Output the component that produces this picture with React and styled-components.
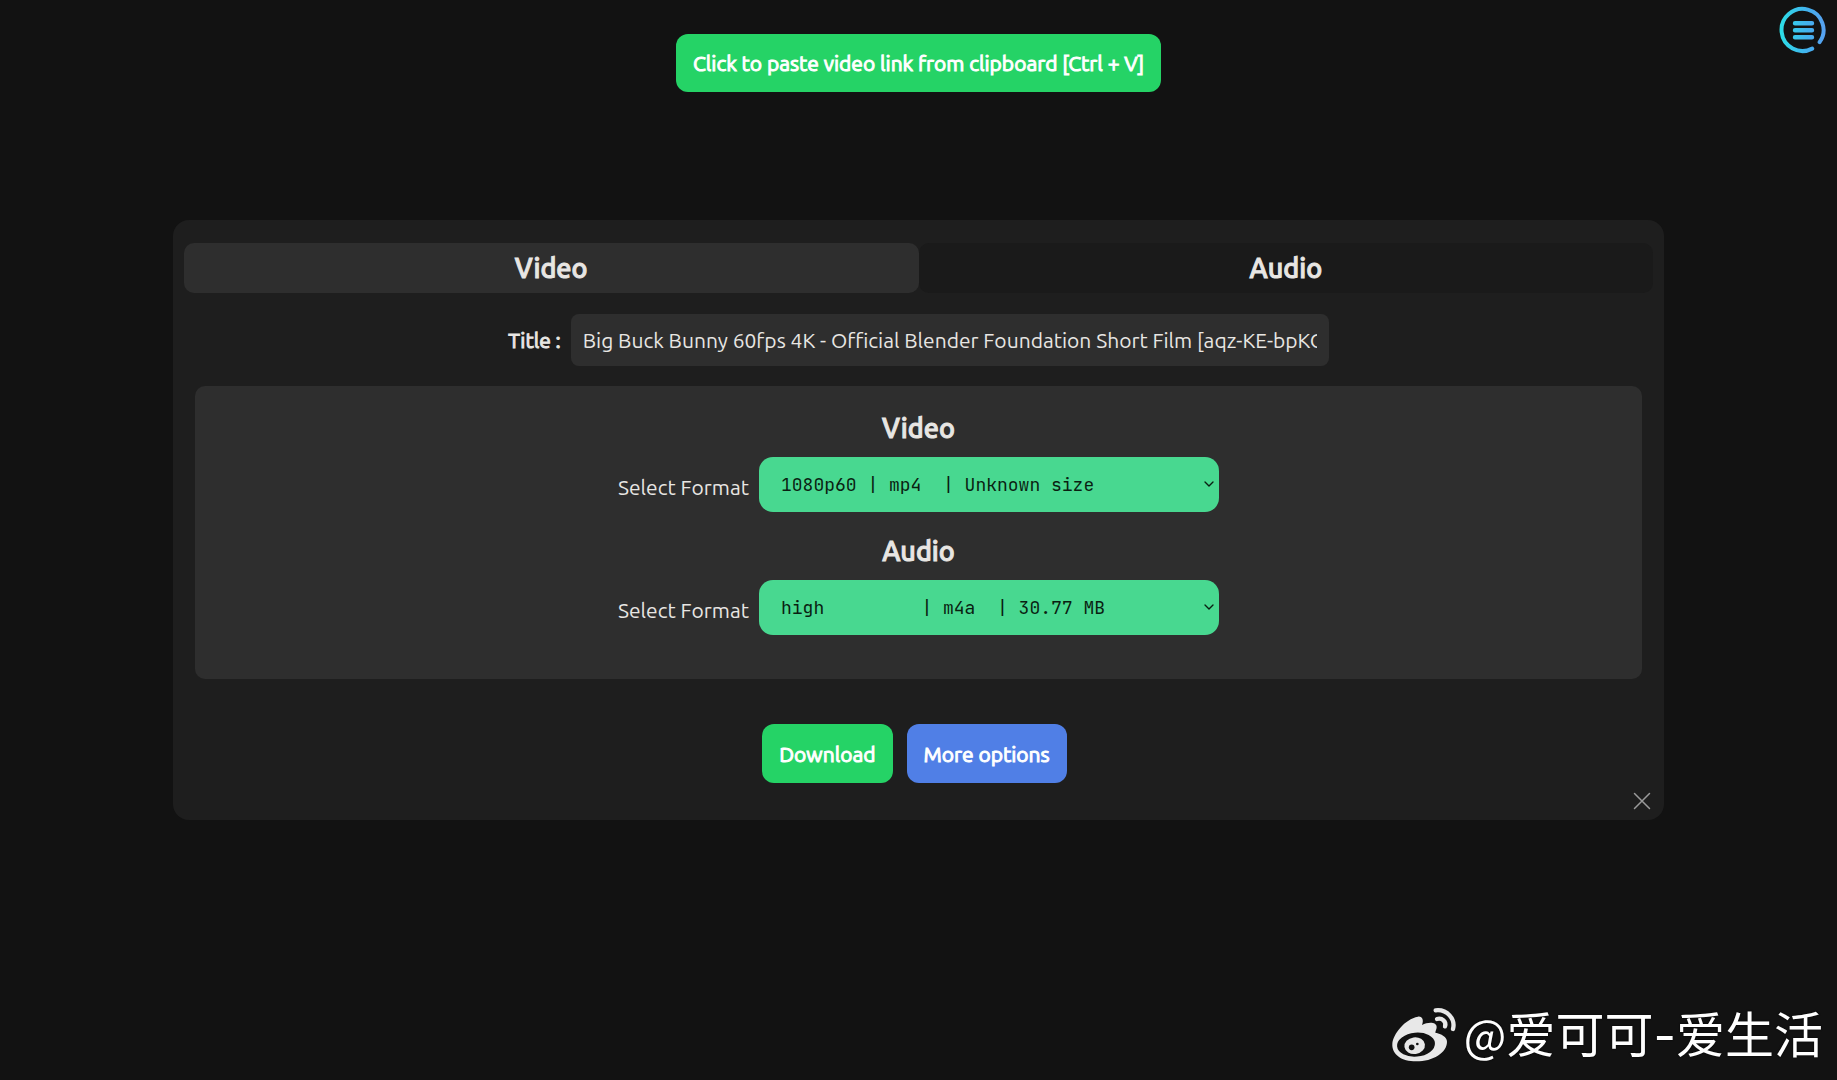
import React, { useState } from "react";
import styled, { createGlobalStyle, css } from "styled-components";
import { ChevronDown } from "lucide-react";

const GlobalStyle = createGlobalStyle`
  *, *::before, *::after { box-sizing: border-box; }
  body {
    margin: 0;
    min-height: 100vh;
    background: #121212;
    color: #e8e6e3;
    font-family: Ubuntu, "Noto Sans", "Open Sans", sans-serif;
    font-size: 21px;
    line-height: 28px;
  }
  button, input, select { font: inherit; border: none; margin: 0; }
`;

const strong = css`
  font-weight: 400;
  -webkit-text-stroke: 1px currentColor;
`;

const headline = css`
  font-size: 27px;
  line-height: 36px;
  font-weight: 500;
  -webkit-text-stroke: 1px currentColor;
`;

const Page = styled.div`
  display: flex;
  flex-direction: column;
  align-items: center;
  padding-top: 34px;
`;

const Button = styled.button`
  height: ${(p) => p.$height || 59}px;
  padding: 0 17px;
  border-radius: 12px;
  background: ${(p) => p.$color || "#25d366"};
  color: #fff;
  cursor: pointer;
  ${strong}
`;

const MenuButton = styled.button`
  position: fixed;
  top: 6px;
  right: 10px;
  padding: 0;
  background: none;
  line-height: 0;
  cursor: pointer;
`;

const Panel = styled.main`
  display: flex;
  flex-direction: column;
  width: calc(80% + 22px);
  margin-top: 128px;
  padding: 23px 11px 10px;
  border-radius: 16px;
  background: #1e1e1e;
`;

const Tabs = styled.div`
  display: grid;
  grid-template-columns: 1fr 1fr;
`;

const Tab = styled.button`
  height: 50px;
  border-radius: 10px;
  background: ${(p) => (p.$active ? "#2e2e2e" : "#1a1a1a")};
  color: inherit;
  cursor: pointer;
  ${headline}
`;

const TitleRow = styled.div`
  display: flex;
  justify-content: center;
  align-items: center;
  gap: 10px;
  margin-top: 21px;
`;

const TitleLabel = styled.label`
  ${strong}
`;

const TitleInput = styled.input`
  width: 758px;
  height: 52px;
  padding: 0 12px;
  border-radius: 8px;
  background: #2e2e2e;
  color: inherit;
`;

const Formats = styled.section`
  display: flex;
  flex-direction: column;
  align-items: center;
  margin: 20px 11px 0;
  padding: 24px 0 44px;
  border-radius: 10px;
  background: #2e2e2e;
`;

const Heading = styled.h2`
  margin: ${(p) => (p.$spaced ? "21px" : 0)} 0 11px;
  ${headline}
`;

const FormatRow = styled.div`
  display: flex;
  align-items: center;
  gap: 10px;
`;

const FormatLabel = styled.label`
  padding-top: 4px;
`;

const SelectBox = styled.div`
  position: relative;
  display: flex;

  svg {
    position: absolute;
    right: 2px;
    top: 19px;
    color: #0a1f12;
    pointer-events: none;
  }
`;

const FormatSelect = styled.select`
  appearance: none;
  width: 460px;
  height: 55px;
  padding: 0 22px;
  border-radius: 14px;
  background: #48d890;
  color: #0a1f12;
  font-family: "JetBrains Mono", "DejaVu Sans Mono", monospace;
  font-size: 18px;
`;

const Actions = styled.div`
  display: flex;
  justify-content: center;
  gap: 14px;
  margin-top: 45px;
  padding-right: 8px;
`;

const CloseButton = styled.button`
  align-self: flex-end;
  margin-right: 2px;
  margin-top: 9px;
  padding: 0;
  background: none;
  color: #9a9a9a;
  line-height: 0;
  cursor: pointer;
`;

const Watermark = styled.div`
  position: fixed;
  right: 14px;
  bottom: 8px;
  display: flex;
  align-items: center;
  gap: 7px;
  color: #fff;
  font-family: "Noto Sans CJK SC", sans-serif;
  font-size: 49px;
  line-height: 72px;
  white-space: nowrap;
  text-shadow: 0 0 2px #000;
`;

const AtSign = styled.span`
  font-size: 45px;
`;

const Dash = styled.span`
  font-family: Inter, sans-serif;
`;

const FORMATS = {
  video: ["1080p60 | mp4  | Unknown size"],
  audio: ["high         | m4a  | 30.77 MB"],
};

const keepSpaces = (s) => s.replace(/ /g, "\u00a0");

function MenuIcon() {
  return (
    <svg width="48" height="48" viewBox="0 0 48 48" fill="none" strokeLinecap="round">
      <defs>
        <linearGradient id="ring" x1="0" y1="24" x2="48" y2="24" gradientUnits="userSpaceOnUse">
          <stop offset="0" stopColor="#2be0e6" />
          <stop offset="0.6" stopColor="#43b0ee" />
          <stop offset="1" stopColor="#5a9ff0" />
        </linearGradient>
      </defs>
      <path d="M33.2 42.6A21 21 0 1 1 40.6 36.2" stroke="url(#ring)" strokeWidth="4" />
      <path d="M16 17.2H33M16 24.2H33M16 31.2H33" stroke="url(#ring)" strokeWidth="4.4" />
    </svg>
  );
}

function CloseIcon() {
  return (
    <svg width="18" height="18" viewBox="0 0 18 18" stroke="currentColor" strokeWidth="1.5" strokeLinecap="round">
      <path d="M1.5 1.5L16.5 16.5M16.5 1.5L1.5 16.5" />
    </svg>
  );
}

function WeiboIcon() {
  return (
    <svg width="66" height="55" viewBox="64 48 198 165">
      <path
        fill="#e8e8e8"
        d="M68 158C70 130 105 84 145 77C158 75 163 88 157 102C175 92 201 92 201 108C201 115 197 120 197 125C215 128 232 138 232 152C232 185 190 211 140 211C95 211 66 190 68 158Z"
      />
      <ellipse cx="139" cy="161" rx="57" ry="36" transform="rotate(-5 139 161)" fill="#121212" />
      <ellipse cx="135" cy="164" rx="31" ry="25" transform="rotate(-8 135 164)" fill="#e8e8e8" />
      <circle cx="126" cy="169" r="8.5" fill="#121212" />
      <circle cx="143" cy="159" r="4" fill="#121212" />
      <g fill="none" stroke="#e8e8e8" strokeWidth="13" strokeLinecap="round">
        <path d="M198 58C232 54 258 84 250 114" />
        <path d="M202 84C217 80 231 91 226 106" />
      </g>
    </svg>
  );
}

function FormatPicker({ id, options }) {
  return (
    <FormatRow>
      <FormatLabel htmlFor={id}>Select Format</FormatLabel>
      <SelectBox>
        <FormatSelect id={id}>
          {options.map((o) => (
            <option key={o}>{keepSpaces(o)}</option>
          ))}
        </FormatSelect>
        <ChevronDown size={16} strokeWidth={2} />
      </SelectBox>
    </FormatRow>
  );
}

export default function App() {
  const [tab, setTab] = useState("video");
  return (
    <>
      <GlobalStyle />
      <Page>
        <Button $height={58}>Click to paste video link from clipboard [Ctrl + V]</Button>
        <MenuButton aria-label="Menu">
          <MenuIcon />
        </MenuButton>
        <Panel>
          <Tabs>
            <Tab $active={tab === "video"} onClick={() => setTab("video")}>Video</Tab>
            <Tab $active={tab === "audio"} onClick={() => setTab("audio")}>Audio</Tab>
          </Tabs>
          <TitleRow>
            <TitleLabel htmlFor="title">Title :</TitleLabel>
            <TitleInput
              id="title"
              defaultValue="Big Buck Bunny 60fps 4K - Official Blender Foundation Short Film [aqz-KE-bpKQ]"
            />
          </TitleRow>
          <Formats>
            <Heading>Video</Heading>
            <FormatPicker id="video-format" options={FORMATS.video} />
            <Heading $spaced>Audio</Heading>
            <FormatPicker id="audio-format" options={FORMATS.audio} />
          </Formats>
          <Actions>
            <Button>Download</Button>
            <Button $color="#507fe6">More options</Button>
          </Actions>
          <CloseButton aria-label="Close">
            <CloseIcon />
          </CloseButton>
        </Panel>
      </Page>
      <Watermark>
        <WeiboIcon />
        <span><AtSign>@</AtSign>爱可可<Dash>-</Dash>爱生活</span>
      </Watermark>
    </>
  );
}
